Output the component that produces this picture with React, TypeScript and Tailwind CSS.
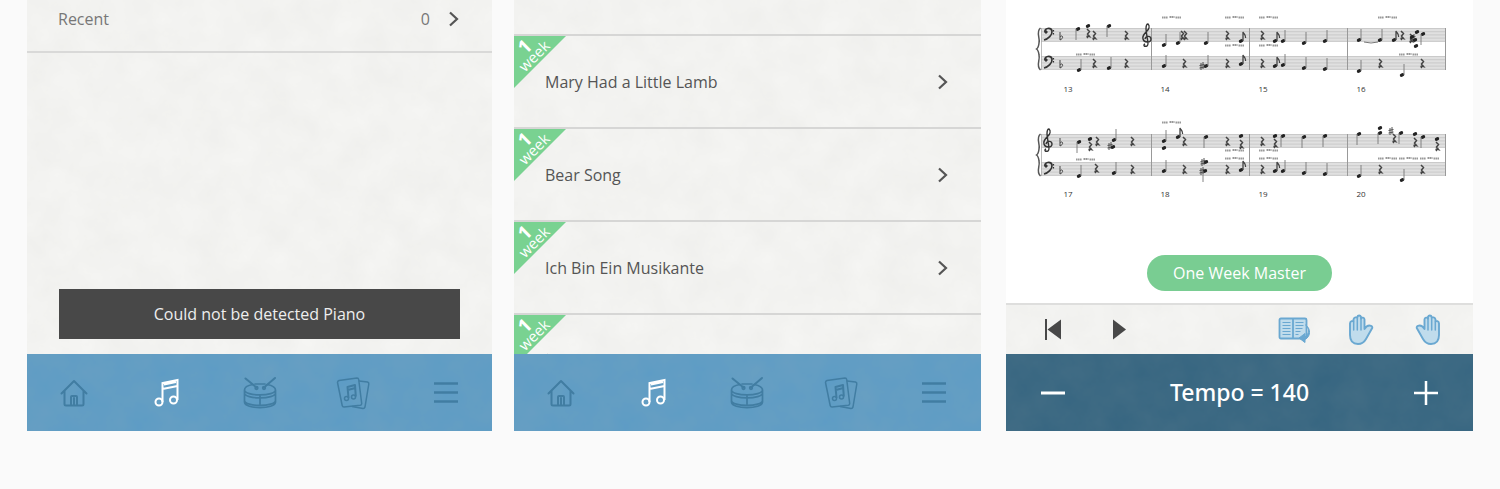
import React from "react";

type Note = { x: number; y: number; stem?: "up" | "down"; flag?: boolean };

const SYSTEMS = [
  { top: 28, bottom: 56, treble: false, number: 92 },
  { top: 134, bottom: 162, treble: true, number: 197 },
];

const BARS = [1152, 1250, 1348, 1446];

const UP: [number, number][] = [
  [1164, 45], [1178, 43], [1206, 43], [1283, 41], [1304, 43], [1325, 41], [1359, 40], [1380, 40],
  [1079, 70], [1109, 68], [1164, 66], [1206, 66], [1283, 65], [1304, 68], [1325, 69], [1359, 71], [1402, 75],
  [1114, 140], [1164, 141], [1079, 176], [1114, 173], [1164, 171], [1283, 171], [1304, 173], [1325, 174],
  [1359, 176], [1402, 180],
];
const DOWN: [number, number][] = [
  [1078, 29], [1109, 26], [1423, 34], [1079, 142], [1206, 137], [1283, 136], [1304, 137], [1325, 136],
  [1359, 134], [1380, 133], [1401, 133], [1423, 137], [1205, 171],
];
const FLAGGED: [number, number][] = [
  [1241, 41], [1241, 64], [1275, 41], [1394, 40], [1275, 66], [1178, 137], [1241, 170], [1275, 171],
];
const HEADS: [number, number][] = [
  [1088, 26], [1417, 32], [1412, 37], [1415, 40], [1416, 46], [1113, 147], [1164, 148], [1241, 136], [1275, 136],
  [1380, 128], [1415, 134], [1437, 139], [1206, 162], [1090, 139],
];
const RESTS: [number, number][] = [
  [1088, 33], [1094, 35], [1126, 35], [1182, 35], [1185, 35], [1227, 35], [1262, 35], [1402, 35], [1411, 38],
  [1094, 63], [1126, 63], [1184, 63], [1227, 63], [1262, 63], [1380, 63], [1422, 63],
  [1090, 146], [1097, 141], [1132, 141], [1184, 141], [1227, 141], [1241, 144], [1262, 141], [1275, 143],
  [1394, 138], [1415, 142], [1437, 146],
  [1096, 168], [1132, 169], [1184, 169], [1227, 169], [1262, 169], [1380, 169], [1422, 169],
];
const SHARPS: [number, number][] = [
  [1202, 66], [1413, 38], [1110, 146], [1202, 171], [1203, 162], [1391, 131],
];
const MARKS: [number, number][] = [
  [1162, 17], [1225, 17], [1259, 17], [1378, 17], [1076, 54], [1225, 45], [1259, 45], [1399, 54],
  [1162, 122], [1076, 159], [1225, 150], [1225, 158], [1259, 150], [1259, 158], [1378, 158], [1399, 158], [1420, 158],
];
const NUMBER_X = [1068, 1165, 1263, 1361];

function NoteMark({ x, y, stem, flag }: Note) {
  return (
    <g>
      <ellipse cx={x} cy={y} rx="2.3" ry="1.7" fill="#222" transform={`rotate(-25 ${x} ${y})`} />
      {stem === "up" && <path d={`M${x + 2} ${y}v-11`} stroke="#777" strokeWidth=".9" />}
      {stem === "down" && <path d={`M${x - 2} ${y}v11`} stroke="#777" strokeWidth=".9" />}
      {flag && <path d={`M${x + 2} ${y}v-9c.5 2 3 2 2.6 6`} fill="none" stroke="#444" strokeWidth="1.3" />}
    </g>
  );
}

function BassClef({ y }: { y: number }) {
  return (
    <g fill="none" stroke="#333">
      <path d={`M1045 ${y + 4}c-1-4 6-5 7-1 .6 4-4 8-8 9`} strokeWidth="1.7" />
      <circle cx="1046" cy={y + 4} r="1.2" fill="#333" />
      <path d={`M1053.500 ${y + 2}v1.500M1053.500 ${y + 5}v1.500`} strokeWidth="1.2" />
    </g>
  );
}

function TrebleClef({ x, y }: { x: number; y: number }) {
  return (
    <path
      d={`M${x} ${y + 17}c-3 1-4-1-2-2M${x} ${y + 17}c2-1 1-4 0-9l-1-8c0-4 1-5 2-5 2 2 1 5-1 7-3 3-5 5-4 8 1 4 8 4 8 0 0-3-5-4-6 0`}
      fill="none"
      stroke="#333"
      strokeWidth="1.4"
    />
  );
}

function Score() {
  return (
    <svg viewBox="1006 0 467 210" className="block h-auto w-full" role="img" aria-label="Sheet music">
      {SYSTEMS.map((s) => (
        <g key={s.top}>
          {[s.top, s.bottom].map((top) => (
            <g key={top}>
              <rect x="1041" y={top} width="405" height="14" fill="#e0e0e0" />
              {[0, 1, 2, 3, 4].map((i) => (
                <path key={i} d={`M1041 ${top + 0.5 + i * 3.2}h405`} stroke="#c0c0c0" strokeWidth=".7" />
              ))}
            </g>
          ))}
          <path d={`M1041.500 ${s.top}V${s.bottom + 14}`} stroke="#aaa" strokeWidth=".8" />
          <path
            d={`M1040.500 ${s.top}c-5 4 0 10-1.500 15-.3 3-1 5-2.500 6 1.500 1 2.200 3 2.500 6 1.500 5-3.500 11 1.500 15`}
            fill="none"
            stroke="#555"
            strokeWidth="1.5"
          />
          {BARS.map((x) => (
            <path key={x} d={`M${x - 0.5} ${s.top}V${s.bottom + 14}`} stroke="#999" strokeWidth="1" />
          ))}
          {s.treble ? <TrebleClef x={1048} y={s.top} /> : <BassClef y={s.top} />}
          <BassClef y={s.bottom} />
          {[s.top + 4, s.bottom + 4].map((y) => (
            <path key={y} d={`M1060 ${y}v8c2-1 3-2 2.500-3.500-.5-1-2-.5-2.500.5`} fill="none" stroke="#444" strokeWidth="1" />
          ))}
        </g>
      ))}
      <TrebleClef x={1147} y={29} />
      <path d="M1364 42q7 2 14 0" fill="none" stroke="#777" strokeWidth="1" />
      {MARKS.map(([x, y]) => (
        <path
          key={`${x}-${y}`}
          d={`M${x} ${y + 0.5}h6M${x + 7.5} ${y}h5M${x + 13.5} ${y + 0.5}h5.500`}
          stroke="#999"
          strokeWidth="2"
          strokeDasharray="1.600 .4"
        />
      ))}
      {RESTS.map(([x, y]) => (
        <path
          key={`${x}-${y}`}
          d={`M${x - 1} ${y - 4}l2.500 2.500-2 2.500 2 2.500c-3-1-3 0-1.500 1.500`}
          fill="none"
          stroke="#444"
          strokeWidth="1.5"
        />
      ))}
      {SHARPS.map(([x, y]) => (
        <path
          key={`${x}-${y}`}
          d={`M${x - 1} ${y - 3}v7M${x + 1} ${y - 4}v7M${x - 2.5} ${y - 0.5}l5-1M${x - 2.5} ${y + 2}l5-1`}
          stroke="#444"
          strokeWidth=".9"
        />
      ))}
      {UP.map(([x, y]) => <NoteMark key={`${x}-${y}`} x={x} y={y} stem="up" />)}
      {DOWN.map(([x, y]) => <NoteMark key={`${x}-${y}`} x={x} y={y} stem="down" />)}
      {FLAGGED.map(([x, y]) => <NoteMark key={`${x}-${y}`} x={x} y={y} flag />)}
      {HEADS.map(([x, y]) => <NoteMark key={`${x}-${y}`} x={x} y={y} />)}
      {SYSTEMS.map((s, row) =>
        NUMBER_X.map((x, i) => (
          <text key={`${row}-${i}`} x={x} y={s.number} textAnchor="middle" fill="#333" className="font-['Open_Sans',sans-serif] text-[8px] font-medium">
            {13 + row * 4 + i}
          </text>
        )),
      )}
    </svg>
  );
}

function Grain({ id, strength }: { id: string; strength: string }) {
  return (
    <svg className="pointer-events-none absolute inset-0 size-full" aria-hidden="true">
      <filter id={id} x="0" y="0" width="100%" height="100%">
        <feTurbulence type="fractalNoise" baseFrequency="0.03" numOctaves="5" seed="7" />
        <feColorMatrix values={`0 0 0 0 0.45  0 0 0 0 0.45  0 0 0 0 0.42  ${strength} 0 0 0 -0.02`} />
      </filter>
      <rect width="100%" height="100%" filter={`url(#${id})`} />
    </svg>
  );
}

function HomeIcon() {
  return (
    <svg viewBox="0 0 32 32" className="size-8" fill="none" stroke="currentColor" strokeWidth="2" strokeLinejoin="round" strokeLinecap="round">
      <path d="M3.500 16.500 16 4l12.500 12.500M6.500 14v13q0 1.500 1.500 1.500h16q1.500 0 1.500-1.500V14" />
      <path d="M13 28v-8q0-1 1-1h4q1 0 1 1v8M16 21v7" />
    </svg>
  );
}

function SongsIcon() {
  return (
    <svg viewBox="0 0 32 32" className="size-8" fill="none" stroke="currentColor" strokeWidth="2">
      <circle cx="8" cy="25" r="3.500" />
      <circle cx="22.500" cy="23" r="3.500" />
      <path d="M11.500 25V6l15-3v20M11.500 12l15-3M13 7.500l12-2.400" />
    </svg>
  );
}

function DrumIcon() {
  return (
    <svg viewBox="0 0 36 36" className="size-9" fill="none" stroke="currentColor" strokeWidth="1.700" strokeLinecap="round">
      <path d="M11 9.500C5 10.500 2.500 12.500 2.500 15v12c0 7.500 31 7.500 31 0V15c0-2.500-3-4.500-8.500-5.500M13 9h10M2.500 15c0 6.500 31 6.500 31 0M2.500 18c0 6.500 31 6.500 31 0M2.500 25.500c0 6.500 31 6.500 31 0M18 21v8" />
      <path d="m3.500 3.500 11 9M33 3 22 12.500" strokeWidth="2" />
      <circle cx="14.500" cy="13" r="1.300" />
      <circle cx="22" cy="13" r="1.300" />
    </svg>
  );
}

function CardsIcon() {
  return (
    <svg viewBox="0 0 36 36" className="size-9" fill="none" stroke="currentColor" strokeWidth="1.500" strokeLinejoin="round">
      <path d="m4 5.500 18-2.500q1.500 0 1.700 1.500l3 24q0 1.500-1.400 1.800L9 32q-1.500 0-1.800-1.500L2.500 7.500Q2.500 6 4 5.500Z" />
      <path d="m24 6 8.500 1q1.500.5 1.300 2L30 32q-.5 1.500-2 1.400L17 31.500" />
      <circle cx="11.500" cy="23.500" r="2" />
      <circle cx="18.500" cy="22" r="2" />
      <path d="m13.500 23-1-11 7.500-2 .8 11.500M12.800 15l7.500-2" strokeWidth="2" />
    </svg>
  );
}

function MenuIcon() {
  return (
    <svg viewBox="0 0 32 32" className="size-8" stroke="currentColor" strokeWidth="2.400">
      <path d="M4 6.500h24M4 15.500h24M4 24.500h24" />
    </svg>
  );
}

const TABS = [
  { label: "Home", icon: <HomeIcon /> },
  { label: "Songs", icon: <SongsIcon />, active: true },
  { label: "Rhythm", icon: <DrumIcon /> },
  { label: "Cards", icon: <CardsIcon /> },
  { label: "Menu", icon: <MenuIcon /> },
];

function TabBar({ id }: { id: string }) {
  return (
    <nav className="relative bg-[#5d9cc5]">
      <Grain id={id} strength="0.160" />
      <div className="relative grid h-[77px] grid-cols-5">
        {TABS.map((t) => (
          <button
            key={t.label}
            type="button"
            aria-label={t.label}
            className={t.active ? "flex items-center justify-center text-white" : "flex items-center justify-center text-[#417da2]"}
          >
            {t.icon}
          </button>
        ))}
      </div>
    </nav>
  );
}

function Chevron() {
  return (
    <svg viewBox="0 0 12 18" className="h-[18px] w-3 shrink-0" fill="none" stroke="#555" strokeWidth="2.200">
      <path d="m2 2.500 7 6.500-7 6.500" />
    </svg>
  );
}

function WeekBadge() {
  return (
    <span className="absolute top-0 left-0 size-[52px] bg-[#79d291] text-white [clip-path:polygon(0_0,100%_0,0_100%)]">
      <span className="absolute inset-x-0 -top-1 flex h-[60px] -rotate-45 flex-col items-center">
        <span className="text-[19px] leading-4 font-bold">1</span>
        <span className="text-[15px] leading-[10px]">week</span>
      </span>
    </span>
  );
}

function SongRow({ title }: { title: string }) {
  return (
    <li className="border-t-2 border-[#d6d6d5]">
      <button type="button" className="relative flex h-[91px] w-full items-center justify-between pr-8 pl-[31px] text-left text-[#555]">
        <WeekBadge />
        {title}
        <Chevron />
      </button>
    </li>
  );
}

function BookIcon() {
  return (
    <svg viewBox="0 0 32 28" className="h-7 w-8" fill="#c0dcec" stroke="#6aa8d1" strokeWidth="1.800" strokeLinejoin="round">
      <path d="M3 2.500h24q1.500 0 1.500 1.500v17q0 1.500-1.500 1.500H3q-1.500 0-1.500-1.500V4q0-1.500 1.500-1.500ZM15 3v19" />
      <path d="M4.500 6.500h8M4.500 9.500h8M4.500 12.500h8M4.500 15.500h8M4.500 18.500h8M17.500 6.500h8M17.500 9.500h8M17.500 12.500h7M17.500 15.500h5M17.500 18.500h3" strokeWidth="1.200" />
      <path d="M27.500 9c4 3 4 9-.5 12v-3.500L21 22l6 4.500v-3c6-3 6-11 .5-14.500Z" fill="#6aa8d1" strokeWidth="1" />
    </svg>
  );
}

function HandIcon({ flip }: { flip?: boolean }) {
  return (
    <svg viewBox="0 0 26 32" className={flip ? "h-8 w-[26px] -scale-x-100" : "h-8 w-[26px]"} fill="#c0dcec" stroke="#6aa8d1" strokeWidth="1.900" strokeLinejoin="round" strokeLinecap="round">
      <path d="M2 9.500C2 7 5 6.500 5.500 7.500V5.500C6 3 8.500 3 9.300 4V3c.5-2 3.200-2 3.700 0v1.500c.7-1.500 3.500-1 3.500 1V15c1.500-2.500 4-4 6.500-3.200 1.500.7 1.700 2 .8 3L18 25c-2 3.500-4.500 5-8 5C4.500 30 2 26.500 2 21Z" />
      <path d="M5.700 8v8M9.300 5v11M13 5v11" strokeWidth="1.500" />
    </svg>
  );
}

export default function App() {
  return (
    <main className="flex items-start bg-[#fafafa] px-[27px] pb-[59px] font-['Open_Sans',sans-serif] text-[16px]">
      <section className="flex shrink grow-[465] basis-0 flex-col">
        <div className="relative flex h-[354px] flex-col bg-[#f5f5f3] text-[#777]">
          <Grain id="grain-recent" strength="0.120" />
          <button type="button" className="relative flex h-[53px] items-center border-b-2 border-[#d9d9d8] pr-8 pb-[14px] pl-[31px] text-left">
            <span className="grow">Recent</span>
            <span className="pr-[18px]">0</span>
            <Chevron />
          </button>
          <p role="status" className="relative mx-8 mt-auto mb-[15px] bg-[#484848] py-[13px] text-center text-[16px] leading-6 text-[#eee]">
            Could not be detected Piano
          </p>
        </div>
        <TabBar id="grain-tabs-a" />
      </section>

      <section className="mr-[25px] ml-[22px] flex shrink grow-[467] basis-0 flex-col">
        <div className="relative h-[354px] overflow-hidden bg-[#f5f5f3]">
          <Grain id="grain-songs" strength="0.120" />
          <ul className="relative pt-[34px]">
            <SongRow title="Mary Had a Little Lamb" />
            <SongRow title="Bear Song" />
            <SongRow title="Ich Bin Ein Musikante" />
            <SongRow title="" />
          </ul>
        </div>
        <TabBar id="grain-tabs-b" />
      </section>

      <section className="flex shrink grow-[467] basis-0 flex-col bg-white">
        <Score />
        <button type="button" className="mt-[45px] mb-3 h-9 self-center rounded-full bg-[#79cd92] px-[26px] text-[16px] text-white">
          One Week Master
        </button>
        <div className="relative border-t-2 border-[#dededd] bg-[#f5f5f3]">
          <Grain id="grain-player" strength="0.120" />
          <div className="relative flex h-[49px] items-center pr-8 pl-[38px]">
            <button type="button" aria-label="Back to start">
              <svg viewBox="0 0 18 22" className="h-[22px] w-[18px]" fill="#484848">
                <path d="M1 0h2v21H1ZM17 .5v20L3.500 10.500Z" />
              </svg>
            </button>
            <button type="button" aria-label="Play" className="ml-[49px]">
              <svg viewBox="0 0 16 22" className="h-[22px] w-4" fill="#484848">
                <path d="M2 .5v20l13-10Z" />
              </svg>
            </button>
            <button type="button" aria-label="Turn pages" className="ml-auto"><BookIcon /></button>
            <button type="button" aria-label="Left hand" className="ml-[38px]"><HandIcon /></button>
            <button type="button" aria-label="Right hand" className="ml-[41px]"><HandIcon flip /></button>
          </div>
        </div>
        <div className="relative bg-[#376681]">
          <Grain id="grain-tempo" strength="0.120" />
          <div className="relative flex h-[77px] items-center justify-between px-[34px] text-white">
            <button type="button" aria-label="Slower">
              <svg viewBox="0 0 26 26" className="size-[26px]" stroke="currentColor" strokeWidth="3"><path d="M1 13h24" /></svg>
            </button>
            <output className="font-['Noto_Sans',sans-serif] text-[23px] font-medium">Tempo = 140</output>
            <button type="button" aria-label="Faster">
              <svg viewBox="0 0 26 26" className="size-[26px]" stroke="currentColor" strokeWidth="2.500"><path d="M1 13h24M13 1v24" /></svg>
            </button>
          </div>
        </div>
      </section>
    </main>
  );
}
